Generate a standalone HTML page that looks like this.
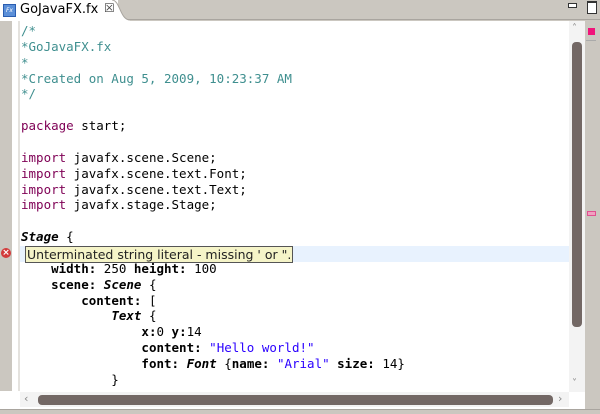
<!DOCTYPE html>
<html><head><style>
body{margin:0;width:600px;height:414px;background:#cbc7c0;position:relative;overflow:hidden;font-family:"DejaVu Sans",sans-serif}
.tab{position:absolute;left:0;top:0;width:118px;height:21px;background:#fff}
.tabcurve{position:absolute;left:108px;top:0;width:22px;height:21px}
.tabline{position:absolute;left:125px;top:19px;width:475px;height:1px;background:#a9a59f}
.ed{position:absolute;left:0;top:21px;width:585px;height:388px;background:#fff}
.g1{position:absolute;left:0;top:21px;width:12px;height:370px;background:#cbc7c0}
.g2{position:absolute;left:18px;top:21px;width:2px;height:370px;background:#e4e2de}
.code{position:absolute;left:21px;top:23px;font-family:"DejaVu Sans Mono",monospace;font-size:12.5px;line-height:15.86px;white-space:pre;color:#000}
.c{color:#3f8f8f}.k{color:#7f0055}.b{font-weight:bold}.i{font-style:italic;font-weight:bold}.s{color:#2a00ff}
.hl{position:absolute;left:20px;top:246px;width:550px;height:16px;background:#e8f2fe}
.tip{position:absolute;left:25px;top:246px;height:15px;padding:0 1px;background:#f5f4c8;border:1px solid #555;font-size:12.5px;line-height:15px;color:#222;white-space:nowrap}
.vs{position:absolute;left:569px;top:21px;width:16px;height:371px;background:#f3f3f3}
.vt{position:absolute;left:572px;top:42px;width:10px;height:285px;background:#736865;border-radius:4px}
.hs{position:absolute;left:20px;top:392px;width:549px;height:15px;background:#f3f3f3}
.ht{position:absolute;left:38px;top:395px;width:515px;height:10px;background:#736865;border-radius:4px}
.ov{position:absolute;left:585px;top:21px;width:15px;height:388px;background:#cbc7c0}
</style></head><body>
<div class="tabline"></div>
<div class="tab"></div>
<svg class="tabcurve" viewBox="0 0 22 21"><path d="M0 0 H4 C12 0 12 20 22 20 V21 H0Z" fill="#fff"/><path d="M4 0 C12 0 12 20 22 20" stroke="#a9a59f" fill="none"/></svg>
<div style="position:absolute;left:3px;top:4px;width:11px;height:11px;border:1px solid #2a5db0;background:#5b8fd8;font-size:6px;color:#fff;line-height:11px;text-align:center;font-style:italic">Fx</div>
<div style="position:absolute;left:20px;top:2px;font-size:13px;color:#000">GoJavaFX.fx</div>
<div style="position:absolute;left:104px;top:1px;font-size:12px;color:#444">&#x2612;</div>
<div style="position:absolute;left:568px;top:3px;width:7px;height:3px;border:1px solid #333;background:#fff"></div>
<div style="position:absolute;left:587px;top:1px;width:8px;height:10px;border:1px solid #333;border-top-width:2px;background:#fff"></div>
<div class="ed"></div>
<div class="g1"></div><div class="g2"></div>
<div class="hl"></div>
<div class="code"><span class="c">/*
*GoJavaFX.fx
*
*Created on Aug 5, 2009, 10:23:37 AM
*/</span>

<span class="k">package</span> start;

<span class="k">import</span> javafx.scene.Scene;
<span class="k">import</span> javafx.scene.text.Font;
<span class="k">import</span> javafx.scene.text.Text;
<span class="k">import</span> javafx.stage.Stage;

<span class="i">Stage</span> {

    <span class="b">width:</span> 250 <span class="b">height:</span> 100
    <span class="b">scene:</span> <span class="i">Scene</span> {
        <span class="b">content:</span> [
            <span class="i">Text</span> {
                <span class="b">x:</span>0 <span class="b">y:</span>14
                <span class="b">content:</span> <span class="s">"Hello world!"</span>
                <span class="b">font:</span> <span class="i">Font</span> {<span class="b">name:</span> <span class="s">"Arial"</span> <span class="b">size:</span> 14}
            }</div>
<div class="tip">Unterminated string literal - missing ' or ".</div>
<div style="position:absolute;left:1px;top:248px;width:10px;height:10px;border-radius:50%;background:#d23a3a;color:#fff;font-size:9px;line-height:10px;text-align:center;font-weight:bold">×</div>
<div class="vs"></div><div class="vt"></div>
<div style="position:absolute;left:572px;top:23px;font-size:10px;color:#888">&#x2c4;</div>
<div style="position:absolute;left:572px;top:378px;font-size:10px;color:#888">&#x2c5;</div>
<div class="hs"></div><div class="ht"></div>
<div style="position:absolute;left:24px;top:392px;font-size:11px;color:#888">&#x2039;</div>
<div style="position:absolute;left:558px;top:392px;font-size:11px;color:#888">&#x203a;</div>
<div class="ov"></div>
<div style="position:absolute;left:588px;top:28px;width:7px;height:7px;background:#f0147a"></div>
<div style="position:absolute;left:586px;top:40px;width:10px;height:1px;background:#aaa"></div>
<div style="position:absolute;left:587px;top:211px;width:7px;height:3px;border:1px solid #e05090;background:#f0a0c0"></div>
<div style="position:absolute;left:0;top:409px;width:600px;height:1px;background:#a9a59f"></div>
</body></html>
